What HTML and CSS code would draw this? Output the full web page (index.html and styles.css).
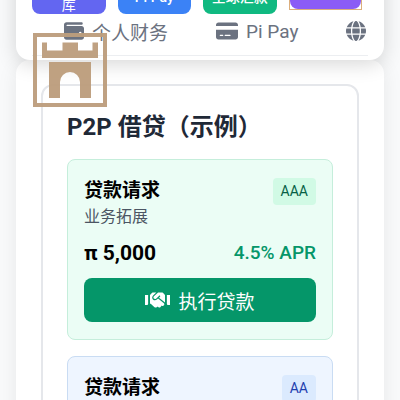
FILE: index.html
```html
<!DOCTYPE html>
<html lang="zh-CN">
<head>
    <meta charset="UTF-8">
    <meta name="viewport" content="width=device-width, initial-scale=1.0">
    <title>Pi Pay</title>
    <link rel="stylesheet" href="styles.css">
</head>
<body>
    <header class="header">
        <div class="actions">
            <button type="button" class="action indigo tall">库</button>
            <button type="button" class="action blue">Pi Pay</button>
            <button type="button" class="action green">全球汇款</button>
            <div class="selected">
                <button type="button" class="action purple" aria-label="more"></button>
            </div>
        </div>
        <nav class="tabs">
            <a href="#finance" class="tab">
                <svg width="20" height="20" viewBox="0 0 512 512"><path d="M64 32C28.700 32 0 60.700 0 96v320c0 35.300 28.700 64 64 64h384c35.300 0 64-28.700 64-64V192c0-35.300-28.700-64-64-64H80c-8.800 0-16-7.200-16-16s7.200-16 16-16h368c17.700 0 32-14.300 32-32s-14.300-32-32-32H64zm352 240a32 32 0 1 1 0 64 32 32 0 1 1 0-64z"/></svg>
                个人财务
            </a>
            <a href="#pay" class="tab">
                <svg width="22" height="20" viewBox="0 0 576 512"><path d="M64 32C28.700 32 0 60.700 0 96v32h576V96c0-35.300-28.700-64-64-64H64zM576 224H0v192c0 35.300 28.700 64 64 64h448c35.300 0 64-28.700 64-64V224zM112 352h64c8.800 0 16 7.200 16 16s-7.200 16-16 16h-64c-8.800 0-16-7.200-16-16s7.200-16 16-16zm112 16c0-8.800 7.200-16 16-16h128c8.800 0 16 7.200 16 16s-7.200 16-16 16H240c-8.800 0-16-7.200-16-16z"/></svg>
                Pi Pay
            </a>
            <a href="#global" class="tab" aria-label="global">
                <svg width="20" height="20" viewBox="0 0 512 512"><path d="M352 256c0 22.200-1.200 43.600-3.300 64H163.300c-2.200-20.400-3.300-41.800-3.300-64s1.200-43.600 3.300-64h185.300c2.200 20.400 3.400 41.800 3.400 64zm28.800-64h123.100c5.300 20.500 8.100 41.900 8.100 64s-2.800 43.500-8.100 64H380.800c2.100-20.600 3.200-42 3.200-64s-1.100-43.400-3.200-64zm112.600-32H376.700c-10-63.900-29.800-117.400-55.300-151.600 78.300 20.700 142 77.500 171.900 151.600zm-149.100 0H167.700c6.100-36.400 15.500-68.600 27-94.700 10.500-23.600 22.200-40.700 33.500-51.500C239.400 3.200 248.700 0 256 0s16.600 3.200 27.800 13.800c11.300 10.800 23 27.900 33.500 51.500 11.600 26 20.900 58.200 27 94.700zm-209 0H18.600C48.600 85.900 112.200 29.100 190.600 8.400 165.100 42.600 145.300 96.100 135.300 160zM8.100 192h123.100c-2.100 20.600-3.200 42-3.200 64s1.100 43.400 3.200 64H8.100C2.800 299.500 0 278.100 0 256s2.800-43.500 8.100-64zm186.600 254.600c-11.600-26-20.900-58.200-27-94.600h176.600c-6.100 36.400-15.500 68.600-27 94.600-10.500 23.600-22.200 40.700-33.500 51.500C272.600 508.800 263.300 512 256 512s-16.600-3.200-27.800-13.800c-11.300-10.800-23-27.900-33.500-51.600zM135.300 352c10 63.900 29.800 117.400 55.300 151.600C112.200 482.900 48.600 426.100 18.600 352h116.700zm358.100 0c-30 74.100-93.600 130.900-171.900 151.600 25.500-34.200 45.200-87.700 55.300-151.600h116.600z"/></svg>
            </a>
        </nav>
    </header>

    <main class="panel">
        <section class="lending">
            <h2>P2P 借贷（示例）</h2>

            <article class="loan loan-green">
                <div class="loan-row">
                    <h3>贷款请求</h3>
                    <span class="rating">AAA</span>
                </div>
                <p class="purpose">业务拓展</p>
                <div class="loan-row terms">
                    <strong class="amount">π 5,000</strong>
                    <span class="rate">4.5% APR</span>
                </div>
                <button type="button" class="fund">
                    <svg width="25" height="20" viewBox="0 0 640 512"><path d="M434.7 64h-85.900c-8 0-15.700 3-21.600 8.400l-98.300 90c-.1.1-.2.3-.3.4-16.600 15.600-16.300 40.500-2.100 56 12.700 13.900 39.400 17.600 56.100 2.700.1-.1.3-.1.4-.2l79.900-73.200c6.500-5.900 16.700-5.500 22.600 1 6 6.500 5.500 16.600-1 22.600l-26.100 23.900L504 313.800c2.900 2.400 5.500 5 7.900 7.700V128l-54.600-54.600c-5.900-6-14.100-9.400-22.600-9.400zM560 128.200v223.900c0 17.700 14.300 32 32 32h48V128.200h-80zM0 384h48c17.700 0 32-14.300 32-32V128.200H0V384zM483.900 338.700L334.600 217.500l-30 27.500c-29.700 27.100-75.200 24.500-101.700-4.400-26.900-29.400-24.800-74.900 4.400-101.700L289.100 64h-83.800c-8.500 0-16.600 3.400-22.600 9.400L128 128v223.900h18.300l90.500 81.900c27.400 22.300 67.700 18.100 90-9.300l.2-.2 17.900 15.500c15.900 13 39.400 10.500 52.300-5.400l31.400-38.600 5.400 4.400c13.700 11.100 33.900 9.100 45-4.700l9.500-11.700c11.200-13.800 9.100-33.900-4.600-45.100z"/></svg>
                    执行贷款
                </button>
            </article>

            <article class="loan loan-blue">
                <div class="loan-row">
                    <h3>贷款请求</h3>
                    <span class="rating">AA</span>
                </div>
            </article>
        </section>
    </main>

    <!-- Castle mark floating over the page -->
    <svg class="castle" width="74" height="74" viewBox="0 0 74 74">
        <rect x="2" y="2" width="70" height="70" fill="none" stroke="#bd9e7d" stroke-width="4"/>
        <path d="M9 9.500h5v8h15.500v-8H45v8h14.500v-8H65V25H9z"/>
        <path d="M16 29h42v36H47V49a10 10 0 0 0-20 0v16H16z"/>
    </svg>
</body>
</html>
```

FILE: styles.css
```css
* {
    box-sizing: border-box;
}

html {
    height: 100%;
    overflow: hidden;
}

body {
    margin: 0;
    padding: 0 16px;
    background-color: #f9fafb;
    font-family: Roboto, "Noto Sans CJK SC", sans-serif;
    color: #000000;
}

h2, h3, p {
    margin: 0;
}

button {
    border: none;
    font-family: inherit;
    cursor: pointer;
}

svg {
    fill: currentColor;
    flex-shrink: 0;
}

.header {
    position: relative;
    margin-top: -60px;
    padding: 0 16px 4px;
    background-color: #ffffff;
    border-radius: 0 0 14px 14px;
    box-shadow: 0 4px 20px rgba(0, 0, 0, 0.16);
}

.actions {
    display: grid;
    grid-template-columns: repeat(4, 1fr);
    align-items: start;
    gap: 12px;
    margin-right: 6px;
}

.action {
    display: flex;
    align-items: flex-end;
    justify-content: center;
    width: 100%;
    height: 74px;
    padding: 0 0 8px;
    border-radius: 8px;
    color: #ffffff;
    font-size: 14px;
    font-weight: 500;
    line-height: 18px;
}

.tall {
    padding-bottom: 0;
    font-weight: 400;
}

.indigo {
    background-color: #6366f1;
}

.blue {
    background-color: #3b82f6;
}

.green {
    background-color: #10b981;
}

.selected {
    height: 70px;
    border: 1px solid #dcae7c;
}

.purple {
    height: 68px;
    background-color: #8b5cf6;
}

.tabs {
    display: flex;
    gap: 48px;
    height: 42px;
    padding-left: 32px;
    border-bottom: 1px solid #eceef1;
    overflow: hidden;
}

.tab {
    display: flex;
    align-items: center;
    gap: 8px;
    height: 34px;
    color: #6b7280;
    font-size: 19px;
    text-decoration: none;
    white-space: nowrap;
}

.panel {
    padding: 24px 25px;
    background-color: #ffffff;
    border-radius: 14px 14px 0 0;
    box-shadow: 0 4px 20px rgba(0, 0, 0, 0.08);
}

.lending {
    padding: 25px 24px 24px;
    border: 2px solid #e5e7eb;
    border-radius: 12px;
}

.lending h2 {
    margin-bottom: 16px;
    color: #1f2937;
    font-size: 24px;
    font-weight: bold;
    line-height: 32px;
}

.loan {
    min-height: 181px;
    margin-bottom: 16px;
    padding: 17px 16px 16px;
    border: 1px solid;
    border-radius: 8px;
}

.loan-green {
    background-color: #ebfdf5;
    border-color: #c5eedb;
}

.loan-blue {
    background-color: #eef5ff;
    border-color: #c9dcf3;
}

.loan-row {
    display: flex;
    align-items: center;
    justify-content: space-between;
}

.loan h3 {
    font-size: 19px;
    line-height: 28px;
}

.rating {
    padding: 0 8px;
    border-radius: 4px;
    font-size: 14px;
    line-height: 27px;
}

.loan-green .rating {
    background-color: #d1fae5;
    color: #065f46;
}

.loan-blue .rating {
    background-color: #dbeafe;
    color: #1e40af;
}

.purpose {
    color: #4b5563;
    font-size: 16px;
    line-height: 24px;
}

.terms {
    margin: 10px 0 11px;
    line-height: 28px;
}

.amount {
    font-size: 21px;
}

.rate {
    color: #059669;
    font-size: 19px;
    font-weight: 500;
}

.fund {
    display: flex;
    align-items: center;
    justify-content: center;
    gap: 8px;
    width: 100%;
    height: 44px;
    border-radius: 8px;
    background-color: #059669;
    color: #ffffff;
    font-size: 19px;
}

.castle {
    position: absolute;
    top: 33px;
    left: 33px;
    color: #bd9e7d;
    opacity: 0.96;
}
```
